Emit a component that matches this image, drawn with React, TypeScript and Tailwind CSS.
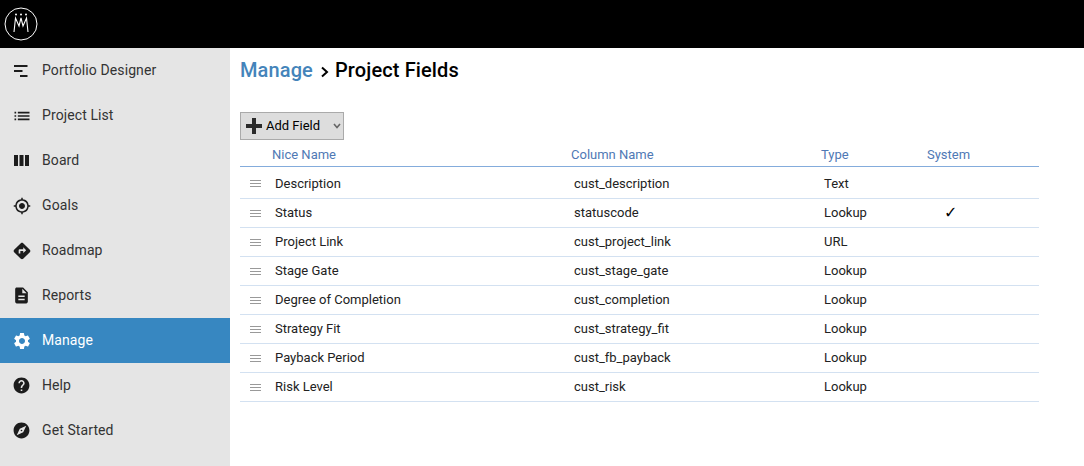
import React from "react";
import { MdList, MdGpsFixed, MdDirections, MdDescription, MdSettings, MdHelp, MdExplore } from "react-icons/md";

const Designer = () => (
  <svg width="14" height="14" viewBox="0 0 14 14" fill="currentColor">
    <rect x="0" y="1" width="13.5" height="2" />
    <rect x="0" y="6" width="8.5" height="2" />
    <rect x="6" y="11" width="7.5" height="2" />
  </svg>
);

const BoardIcon = () => (
  <svg width="15" height="11" viewBox="0 0 15 11" fill="currentColor">
    <rect x="0" y="0" width="4" height="11" />
    <rect x="5.5" y="0" width="4" height="11" />
    <rect x="11" y="0" width="4" height="11" />
  </svg>
);

const nav = [
  { label: "Portfolio Designer", icon: <Designer /> },
  { label: "Project List", icon: <MdList size={20} className="-ml-[2px]" /> },
  { label: "Board", icon: <BoardIcon /> },
  { label: "Goals", icon: <MdGpsFixed size={18} className="-ml-[1px]" /> },
  { label: "Roadmap", icon: <MdDirections size={20} className="-ml-[2px]" /> },
  { label: "Reports", icon: <MdDescription size={19} className="-ml-[2px]" /> },
  { label: "Manage", icon: <MdSettings size={20} className="-ml-[2px]" />, active: true },
  { label: "Help", icon: <MdHelp size={19} className="-ml-[2px]" /> },
  { label: "Get Started", icon: <MdExplore size={19} className="-ml-[2px]" /> },
];

const rows = [
  ["Description", "cust_description", "Text", false],
  ["Status", "statuscode", "Lookup", true],
  ["Project Link", "cust_project_link", "URL", false],
  ["Stage Gate", "cust_stage_gate", "Lookup", false],
  ["Degree of Completion", "cust_completion", "Lookup", false],
  ["Strategy Fit", "cust_strategy_fit", "Lookup", false],
  ["Payback Period", "cust_fb_payback", "Lookup", false],
  ["Risk Level", "cust_risk", "Lookup", false],
] as const;

const Logo = () => (
  <svg width="34" height="34" viewBox="0 0 34 34" fill="none" stroke="#fff">
    <circle cx="17" cy="17" r="16" strokeWidth="1" />
    <path d="M10 25 L11.5 11 L15 19 L17 11 L19 19 L22.5 11 L24 25" strokeWidth="1.1" />
    <circle cx="12" cy="7.5" r="1" fill="#fff" stroke="none" />
    <circle cx="17" cy="7.5" r="1" fill="#fff" stroke="none" />
    <circle cx="22" cy="7.5" r="1" fill="#fff" stroke="none" />
  </svg>
);

const Drag = () => (
  <div className="flex flex-col gap-[2px] w-[11px]">
    <div className="h-px bg-[#999999]" />
    <div className="h-px bg-[#999999]" />
    <div className="h-px bg-[#999999]" />
  </div>
);

const cols = "grid grid-cols-[331px_250px_106px_112px]";

export default function App() {
  return (
    <div className="w-[1084px] h-[466px] overflow-hidden flex flex-col bg-white font-['Roboto',sans-serif] text-[13px] leading-[20px]">
      <header className="h-12 shrink-0 bg-black flex items-center pl-1">
        <Logo />
      </header>
      <div className="flex flex-1 min-h-0">
        <aside className="w-[230px] shrink-0 bg-[#e5e5e5] text-[#333] text-[14px]">
          {nav.map((n) => (
            <div
              key={n.label}
              className={`h-[45px] flex items-center ${n.active ? "bg-[#3787c1] text-white" : ""}`}
            >
              <span className={`w-[42px] pl-[14px] flex items-center ${n.active ? "text-white" : "text-[#1c1c1c]"}`}>
                {n.icon}
              </span>
              <span className="tracking-[0.1px] pb-[2px]">{n.label}</span>
            </div>
          ))}
        </aside>
        <main className="flex-1 pl-[10px]">
          <h1 className="h-[44px] flex items-center text-[20px] font-medium tracking-[0.12px] mb-[20px] text-black">
            <span className="text-[#4484ba]">Manage</span>
            <svg className="ml-[7px] mr-[5px] mt-[4px]" width="10" height="12" viewBox="0 0 10 12" fill="none" stroke="#000" strokeWidth="2">
              <path d="M2 1.5 L7 6 L2 10.5" />
            </svg>
            <span>Project Fields</span>
          </h1>
          <div className="h-[28px] w-[104px] bg-[#dddddd] border border-[#aaaaaa] flex items-center pl-[5px] text-black">
            <svg width="16" height="16" viewBox="0 0 16 16" fill="#2b2b2b" className="shrink-0">
              <rect x="6" y="0" width="4" height="16" />
              <rect x="0" y="6" width="16" height="4" />
            </svg>
            <span className="ml-[4px]">Add Field</span>
            <svg width="8" height="6" viewBox="0 0 8 6" fill="none" stroke="#666" strokeWidth="1.6" className="ml-auto mr-[2px]">
              <path d="M1 1 L4 4.5 L7 1" />
            </svg>
          </div>
          <div className="w-[799px]">
            <div className={`${cols} h-[27px] items-center pt-[3px] border-b border-[#84acdc] text-[#4f79b5] box-border`}>
              <span className="pl-[32px]">Nice Name</span>
              <span>Column Name</span>
              <span>Type</span>
              <span>System</span>
            </div>
            {rows.map(([name, col, type, sys], i) => (
              <div key={name} className={`${cols} ${i === 0 ? "h-[32px] pt-[2px]" : "h-[29px]"} items-center border-b border-[#d3e1f1] text-[#222] box-border`}>
                <span className="flex items-center">
                  <span className="pl-[10px] w-[35px]"><Drag /></span>
                  {name}
                </span>
                <span className="pl-[3px]">{col}</span>
                <span className="pl-[3px]">{type}</span>
                <span className="pl-[17px] text-black text-[16px] font-['DejaVu_Sans',sans-serif]">{sys ? "✓" : ""}</span>
              </div>
            ))}
          </div>
        </main>
      </div>
    </div>
  );
}
